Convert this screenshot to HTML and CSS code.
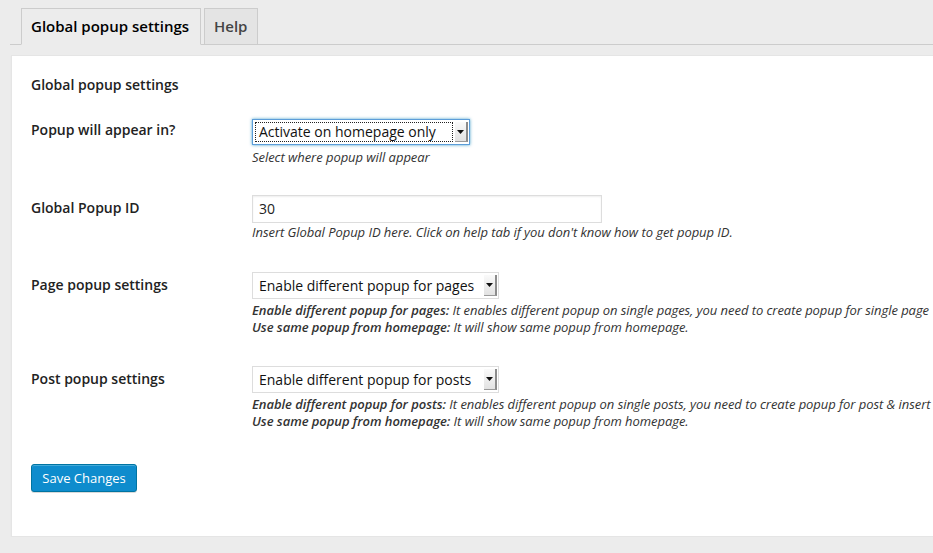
FILE: index.html
```html
<!DOCTYPE html>
<html>
<head>
<meta charset="utf-8">
<link rel="stylesheet" href="styles.css">
</head>
<body>
<div class="wrap">
  <nav class="tabs">
    <a class="tab tab-active">Global popup settings</a>
    <a class="tab">Help</a>
  </nav>
  <div class="panel">
    <h3 class="heading">Global popup settings</h3>
    <div class="row row1">
      <div class="label">Popup will appear in?</div>
      <div class="field">
        <div class="select select-focus w1">
          <span class="sel-text"><span class="focus-ring">Activate on homepage only</span></span>
          <span class="arrow"><svg width="7" height="4" viewBox="0 0 7 4"><path d="M0 0h7L3.5 4z" fill="#111"/></svg></span>
        </div>
        <p class="desc desc1">Select where popup will appear</p>
      </div>
    </div>
    <div class="row row2">
      <div class="label">Global Popup ID</div>
      <div class="field">
        <div class="input">30</div>
        <p class="desc desc2">Insert Global Popup ID here. Click on help tab if you don't know how to get popup ID.</p>
      </div>
    </div>
    <div class="row row3">
      <div class="label">Page popup settings</div>
      <div class="field">
        <div class="select w2">
          <span class="sel-text">Enable different popup for pages</span>
          <span class="arrow"><svg width="7" height="4" viewBox="0 0 7 4"><path d="M0 0h7L3.5 4z" fill="#111"/></svg></span>
        </div>
        <p class="desc"><b>Enable different popup for pages:</b> It enables different popup on single pages, you need to create popup for single page<br><b>Use same popup from homepage:</b> It will show same popup from homepage.</p>
      </div>
    </div>
    <div class="row row4">
      <div class="label">Post popup settings</div>
      <div class="field">
        <div class="select w2">
          <span class="sel-text">Enable different popup for posts</span>
          <span class="arrow"><svg width="7" height="4" viewBox="0 0 7 4"><path d="M0 0h7L3.5 4z" fill="#111"/></svg></span>
        </div>
        <p class="desc"><b>Enable different popup for posts:</b> It enables different popup on single posts, you need to create popup for post &amp; insert<br><b>Use same popup from homepage:</b> It will show same popup from homepage.</p>
      </div>
    </div>
    <div class="actions">
      <button class="btn">Save Changes</button>
    </div>
  </div>
</div>
</body>
</html>
```
FILE: styles.css
```css
html, body {
  margin: 0;
  padding: 0;
  background: #ececec;
  font-family: "Open Sans", "Liberation Sans", sans-serif;
  color: #222;
  overflow: hidden;
}
.wrap {
  padding-left: 10px;
  width: 1100px;
}
.tabs {
  display: flex;
  padding: 8px 0 0 11px;
  border-bottom: 1px solid #ccc;
  height: 45px;
  box-sizing: border-box;
}
.tab {
  display: block;
  box-sizing: border-box;
  height: 37px;
  margin-bottom: -1px;
  padding: 5px 10px 0 9px;
  border: 1px solid #ccc;
  background: #e4e4e4;
  font-size: 15px;
  line-height: 24px;
  font-weight: 600;
  color: #444;
  margin-right: 3px;
}
.tab-active {
  background: #ececec;
  border-bottom-color: #ececec;
  color: #000;
  width: 180px;
}
.panel {
  margin-top: 10px;
  margin-left: 1px;
  background: #fff;
  border: 1px solid #e5e5e5;
  box-shadow: 0 1px 1px rgba(0,0,0,0.05);
  padding: 19px 20px 44px 19px;
  height: 482px;
  box-sizing: border-box;
}
.heading {
  margin: 0;
  font-size: 14px;
  line-height: 20px;
  font-weight: 600;
  color: #222;
}
.row {
  display: flex;
}
.row1 { margin-top: 24px; }
.row2 { margin-top: 29px; }
.row3 { margin-top: 31px; }
.row4 { margin-top: 30px; }
.label {
  width: 221px;
  flex: none;
  font-size: 14px;
  line-height: 20px;
  font-weight: 600;
  color: #222;
  padding-top: 3px;
}
.row1 .label { padding-top: 1px; }
.field { flex: 1; }
.select {
  box-sizing: border-box;
  height: 27px;
  border: 1px solid #ddd;
  background: #fff;
  display: flex;
  align-items: center;
  padding: 2px 1px 2px 2px;
  font-size: 14px;
  color: #111;
}
.w1 { width: 218px; height: 26px; }
.w2 { width: 247px; }
.select-focus {
  border-color: #5b9dd9;
  box-shadow: 0 0 3px rgba(30,140,190,0.8);
}
.sel-text {
  flex: 1;
  padding-left: 4px;
  white-space: nowrap;
  line-height: 20px;
}
.select-focus .sel-text { padding-left: 0; }
.focus-ring {
  display: block;
  border: 1px dotted #222;
  padding-left: 3px;
  line-height: 18px;
  margin-right: 2px;
}
.arrow {
  width: 13px;
  align-self: stretch;
  background: linear-gradient(#fafafa, #e2e2e2);
  border-right: 2px solid #8c8c8c;
  border-bottom: 1px solid #9a9a9a;
  display: flex;
  align-items: center;
  justify-content: center;
  box-sizing: border-box;
}
.input {
  box-sizing: border-box;
  width: 350px;
  height: 28px;
  border: 1px solid #ddd;
  box-shadow: inset 0 1px 2px rgba(0,0,0,0.07);
  padding-left: 6px;
  font-size: 14px;
  line-height: 26px;
  color: #222;
}
.desc {
  margin: 3px 0 0;
  font-size: 13px;
  line-height: 17px;
  font-style: italic;
  color: #333;
  white-space: nowrap;
  letter-spacing: -0.05px;
}
.desc1 { margin-top: 4px; }
.desc2 { margin-top: 1px; }
.desc b { font-weight: 600; }
.actions { margin-top: 34px; }
.btn {
  box-sizing: border-box;
  width: 106px;
  height: 28px;
  background: #0e8ccd;
  border: 1px solid #0074a2;
  border-radius: 3px;
  box-shadow: inset 0 1px 0 rgba(120,200,230,0.5), 0 1px 0 rgba(0,0,0,0.15);
  color: #fff;
  font-family: "Open Sans", "Liberation Sans", sans-serif;
  font-size: 13px;
  line-height: 24px;
  padding: 0;
}
```
